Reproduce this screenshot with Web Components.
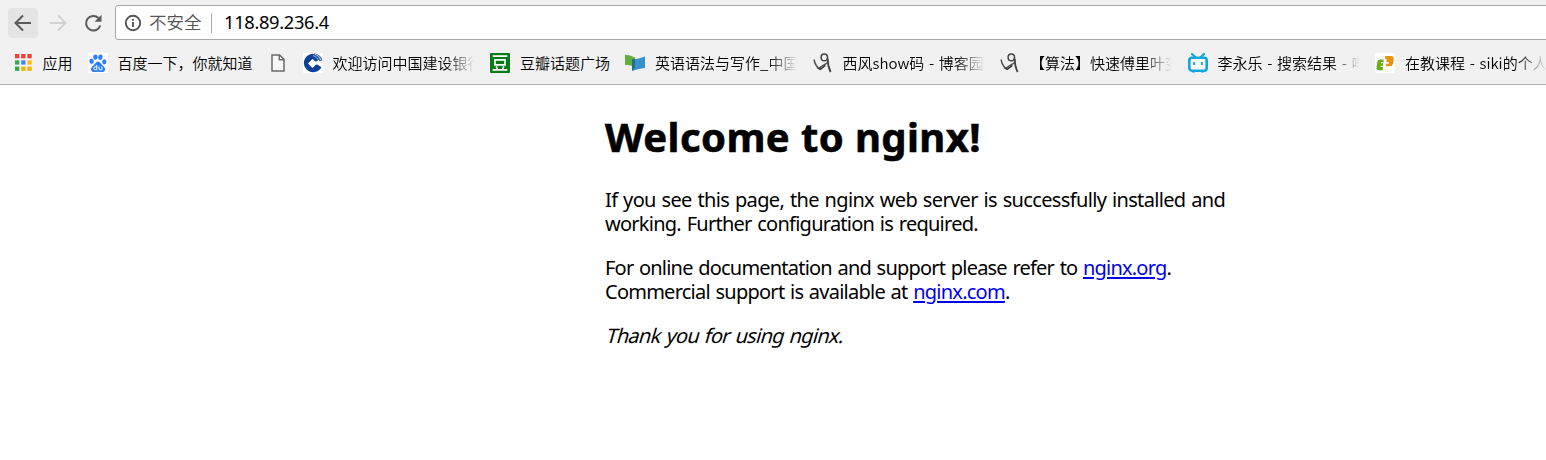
<!DOCTYPE html>
<html lang="zh-CN">
<head>
<meta charset="utf-8">
<title>Welcome to nginx!</title>
<style>
body{margin:0;background:#fff;overflow:hidden;font-family:"Noto Sans","Noto Sans CJK SC",sans-serif;color:#000}
</style>
</head>
<body>
<browser-toolbar></browser-toolbar>
<bookmark-bar>
<bookmark-item icon="apps">应用</bookmark-item>
<bookmark-item icon="baidu">百度一下，你就知道</bookmark-item>
<bookmark-item icon="page"></bookmark-item>
<bookmark-item icon="ccb" long>欢迎访问中国建设银行</bookmark-item>
<bookmark-item icon="douban">豆瓣话题广场</bookmark-item>
<bookmark-item icon="mooc" long>英语语法与写作_中国</bookmark-item>
<bookmark-item icon="cnblogs" long>西风show码 - 博客园</bookmark-item>
<bookmark-item icon="cnblogs" long>【算法】快速傅里叶变</bookmark-item>
<bookmark-item icon="bili" long>李永乐 - 搜索结果 - 哔</bookmark-item>
<bookmark-item icon="siki" long>在教课程 - siki的个人</bookmark-item>
</bookmark-bar>
<welcome-page></welcome-page>
<script>
const define=(name,html,setup)=>customElements.define(name,class extends HTMLElement{
  connectedCallback(){
    if(this.shadowRoot)return;
    this.attachShadow({mode:'open'}).innerHTML=html;
    if(setup)setup(this,this.shadowRoot);
  }
});

const svg=(body,vb='0 0 20 20')=>`<svg viewBox="${vb}" width="20" height="20" fill="none">${body}</svg>`;
const ICONS={
  apps:svg([['#ea4335','#ea4335','#ea4335'],['#34a853','#4285f4','#fbbc05'],['#34a853','#fbb205','#fbb205']].map((r,y)=>r.map((c,x)=>`<rect x="${2+x*6.2}" y="${1+y*6.3}" width="4.300" height="4.300" fill="${c}"/>`).join('')).join('')),
  baidu:svg('<rect width="20" height="20" fill="#fff"/><g fill="#2a7fff"><ellipse cx="3.600" cy="8.300" rx="2.200" ry="2.600" transform="rotate(-12 3.600 8.300)"/><ellipse cx="7.400" cy="4.100" rx="2.200" ry="2.700"/><ellipse cx="12.400" cy="4.200" rx="2.200" ry="2.700" transform="rotate(10 12.400 4.200)"/><ellipse cx="16.300" cy="8.800" rx="2.100" ry="2.600"/><path d="M10 8.600c1.700 0 2.500 1.500 3.600 2.800 1.300 1.500 3.500 2.600 3.500 4.800 0 2-1.600 2.800-3.400 2.800-1.400 0-2.400-.3-3.700-.3s-2.300.3-3.600.3c-1.900 0-3.400-.9-3.400-2.800 0-2.200 2.100-3.400 3.400-4.800C7.500 10.100 8.300 8.600 10 8.600z"/></g><path d="M8.800 12v4.800H7.200a1.400 1.500 0 0 1 0-3H8.800M11 13.500v2.400q0 .9.900.9h2v-3.300" stroke="#fff" stroke-width="1"/>'),
  page:svg('<path d="M4 2h7.600l4.400 4.400V18H4z" fill="#f7f7f7" stroke="#696969" stroke-width="1.500"/><path d="M11.300 2v4.700H16" stroke="#696969" stroke-width="1.400"/>'),
  ccb:svg('<rect width="20" height="20" fill="#fff"/><path d="M9.700.7a9.300 9.300 0 1 0 8.800 13.500L13.500 11l-4 4L5 10.500 9.500 6l3.300 2.800L17 6.300Q14 1.500 9.700.7z" fill="#103f98"/><path d="M9.700 6.600l3.700 3.700-3.700 3.700L6 10.300z" fill="#fff"/><path d="M13 9.300l2.200.8-1.700 1.600-1.500-1z" fill="#fff"/><path d="M11 .5c4.300.2 7.500 2.900 8.500 6.800l-3 1.300C15.500 5 13.500 3 10.300 2z" fill="#416bad"/><path d="M10 2.700c3.100 1 4.700 2.700 5.700 5.600M12 1.200c2.700.8 4.800 2.700 5.800 6" stroke="#fff" stroke-width=".6"/>'),
  douban:svg('<rect width="20" height="20" rx="1" fill="#087b18"/><path d="M2.700 3.200h14.600M2.700 16.800h14.600M6.300 13.300l1 3M13.700 13.300l-1 3" stroke="#fff" stroke-width="1.700"/><path d="M5 6.900h10v5H5z" stroke="#fff" stroke-width="1.700"/>'),
  mooc:svg('<path d="M0 1.700q5 .1 10 2.900v9.200Q5 12 0 11.800z" fill="#62ad3c"/><path d="M7 6.300q6.500 0 13-2.700v11.300q-6.500.7-13 3z" fill="#3693c7"/><path d="M7 6.300l3-.3v8.500l-3 3.400z" fill="#286f85"/>'),
  cnblogs:svg('<path d="M1 6.500q1.300 5.900 4.500 8.800l9.200-5.700" stroke="#555" stroke-width="1.500"/><path d="M4.600 14.800l2.700 1.500 5-4" stroke="#333" stroke-width="1.500"/><ellipse cx="11.300" cy="4.400" rx="3.200" ry="3.300" stroke="#444" stroke-width="1.500"/><path d="M14.700 5.500q0 7.600 2.900 13.500" stroke="#454545" stroke-width="1.800"/>'),
  bili:svg('<path d="M4 1l3.200 3M16 1l-3.200 3" stroke="#12a5dc" stroke-width="2.200" stroke-linecap="round"/><rect x="1.300" y="4.700" width="17.400" height="13" rx="2.600" fill="#fff" stroke="#12a5dc" stroke-width="2.600"/><path d="M6.200 9v3M13.800 9v3" stroke="#12a5dc" stroke-width="1.900"/><path d="M4 18.800h3M13 18.800h3" stroke="#12a5dc" stroke-width="1.500"/>'),
  siki:svg('<rect width="20" height="20" rx="2" fill="#fff"/><path d="M8.700 6.600H5Q2.600 6.700 2.300 9L1.500 14.500Q1.200 17.300 3.700 17.300H7.900V14H5.400l.2-1.300h2.500v-2.500H5.800l.2-1h2.500z" fill="#6aad16"/><path d="M10.200 3h6q2.600 0 2.500 2.700L18.200 10q-.4 3-3.200 3.200h-4v-2.400h2.900l.2-1.600h-2.600V6h-1.500z" fill="#e8940e"/>')
};

define('icon-button',`<style>
:host{display:flex;width:30px;height:30px;border-radius:4px;align-items:center;justify-content:center;color:#5a5a5a}
:host([active]){background:#e4e4e4}:host([disabled]){color:#d2d2d2}
</style><slot></slot>`);

define('address-bar',`<style>
:host{display:flex;box-sizing:border-box;flex:1;height:35px;margin-right:-6px;border:1px solid #a8a8a8;border-radius:3px;background:#fff;align-items:center;padding-left:8px;white-space:nowrap}
svg{flex:none}
.state{font:350 17.500px/30px "Noto Sans CJK SC",sans-serif;color:#555;margin:-2px 0 0 7px;width:54px}
.rule{width:1px;height:20px;background:#aaa;margin:0 12px 0 8px}
.url{font:18.300px/30px "Noto Sans",sans-serif;color:#000;letter-spacing:-.33px;margin-top:-2px}
</style>
<svg width="18" height="18" viewBox="0 0 18 18" fill="none" stroke="#555"><circle cx="9" cy="9" r="7.200" stroke-width="1.900"/><path d="M9 8v5M9 4.900v1.900" stroke-width="1.900"/></svg>
<span class="state">不安全</span><span class="rule"></span><span class="url">118.89.236.4</span>`);

define('browser-toolbar',`<style>
:host{display:flex;box-sizing:border-box;height:46px;background:#f1f1f1;padding:5px 0 0 8px;align-items:flex-start}
icon-button{margin-top:3px;margin-right:5px}icon-button:nth-of-type(3){margin-right:7px}
</style>
<icon-button active><svg width="20" height="20" viewBox="0 0 20 20" fill="none" stroke="currentColor" stroke-width="2"><path d="M18 10H3M10 2.500L2.500 10l7.500 7.500"/></svg></icon-button>
<icon-button disabled><svg width="20" height="20" viewBox="0 0 20 20" fill="none" stroke="currentColor" stroke-width="2"><path d="M2 10h15M10 2.500l7.500 7.500-7.500 7.500"/></svg></icon-button>
<icon-button><svg width="20" height="20" viewBox="0 0 20 20" fill="none" stroke="currentColor" stroke-width="2"><path d="M17.300 12.500A7.300 7.300 0 1 1 15.500 5"/><path d="M18.500 1.700v7h-7z" fill="currentColor" stroke="none"/></svg></icon-button>
<address-bar></address-bar>`);

define('bookmark-bar',`<style>
:host{display:flex;box-sizing:border-box;height:39px;padding:0 0 4px 12.500px;gap:15px;align-items:center;background:#f1f1f1;border-bottom:1px solid #b3b3b3;overflow:hidden}
</style><slot></slot>`);

define('bookmark-item',`<style>
:host{display:flex;flex:none;align-items:center;gap:10px;height:24px}
svg{display:block;flex:none}
.label{font:350 15px/24px "Noto Sans CJK SC",sans-serif;white-space:nowrap;overflow:hidden;color:#000;word-spacing:1.300px}
:host([long]) .label{width:142.500px;-webkit-mask-image:linear-gradient(90deg,#000 112px,transparent 142px);mask-image:linear-gradient(90deg,#000 112px,transparent 142px)}
:host([icon=page]) .label{display:none}
</style><span class="icon"></span><span class="label"><slot></slot></span>`,(host,root)=>{
  root.querySelector('.icon').innerHTML=ICONS[host.getAttribute('icon')];
});

// Justifies one line of text to its "measure" by distributing letter spacing.
define('text-line',`<style>:host{display:block;white-space:nowrap}span{display:inline-block}</style><span><slot></slot></span>`,(host,root)=>{
  const s=root.querySelector('span');
  const gap=(+host.getAttribute('measure')-s.offsetWidth)/host.textContent.length;
  s.style.letterSpacing=gap+'px';
});

define('welcome-page',`<style>
:host{display:block;box-sizing:border-box;width:816px;margin-left:445px;padding:26px 0 0 160px;font:20px/24px "Noto Sans",sans-serif;word-spacing:1.200px}
h1{font:bold 40px/48px "Noto Sans",sans-serif;margin:2px 0 27px;word-spacing:0;-webkit-text-stroke:.6px #000}
p{margin:0 0 20px}
a{color:#00e;text-decoration:underline;text-decoration-thickness:2px;text-underline-offset:2px}
em{display:block;font-style:normal;width:240px;margin-left:1.500px;transform:skewX(-16deg)}
</style>
<h1><text-line measure="376">Welcome to nginx!</text-line></h1>
<p><text-line measure="620">If you see this page, the nginx web server is successfully installed and</text-line>
<text-line measure="373">working. Further configuration is required.</text-line></p>
<p><text-line measure="566">For online documentation and support please refer to <a href="#">nginx.org</a>.</text-line>
<text-line measure="405">Commercial support is available at <a href="#">nginx.com</a>.</text-line></p>
<p><em><text-line measure="237">Thank you for using nginx.</text-line></em></p>`);
</script>
</body>
</html>
